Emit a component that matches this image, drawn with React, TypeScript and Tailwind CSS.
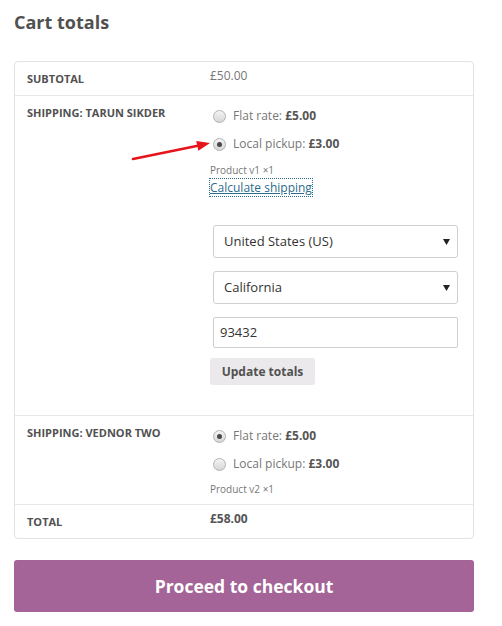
const font = { fontFamily: '"Open Sans", "Liberation Sans", sans-serif' };

const Radio = ({ checked }: { checked?: boolean }) => (
  <span className="relative flex h-[13px] w-[13px] shrink-0 items-center justify-center rounded-full border border-[#b3b3b3] bg-gradient-to-b from-[#f4f4f4] to-[#d6d6d6]">
    {checked && <span className="h-[5px] w-[5px] rounded-full bg-[#4a4a4a]" />}
  </span>
);

const Option = ({ label, price, checked }: { label: string; price: string; checked?: boolean }) => (
  <div className="flex h-[28px] items-center gap-[7px] pl-[3px] text-[12px] leading-[28px] text-[#777]">
    <Radio checked={checked} />
    <span>
      {label} <b className="font-bold text-[#555]">{price}</b>
    </span>
  </div>
);

const Label = ({ children }: { children: string }) => (
  <div className="w-[195px] shrink-0 pl-3 pt-[9px] text-[11px] font-bold leading-[16px] text-[#515151]">
    {children}
  </div>
);

const Caret = () => (
  <svg width="7" height="6" viewBox="0 0 7 6" className="shrink-0">
    <polygon points="0,0 7,0 3.5,6" fill="#222" />
  </svg>
);

export default function App() {
  return (
    <div className="relative min-h-[626px] bg-white px-[14px]" style={font}>
      <h2 className="pt-[8px] text-[18px] font-bold leading-[28px] text-[#515151]">Cart totals</h2>

      <div className="mt-[25px] w-[460px] rounded-[4px] border border-[#e3e3e3]">
        <div className="flex h-[33px]">
          <Label>SUBTOTAL</Label>
          <div className="pt-[4px] text-[12px] leading-[20px] text-[#777]">£50.00</div>
        </div>

        <div className="flex border-t border-[#e8e8e8] pb-[30px]">
          <Label>SHIPPING: TARUN SIKDER</Label>
          <div className="flex-1 pt-[6px]">
            <Option label="Flat rate:" price="£5.00" />
            <Option label="Local pickup:" price="£3.00" checked />
            <div className="mt-[4px] text-[10px] leading-[16px] text-[#777]">Product v1 ×1</div>
            <div className="mt-[1px] text-[12px] leading-[18px]">
              <a href="#" className="text-[#2b6b8a] underline outline-1 outline-dotted outline-[#2b6b8a]">
                Calculate shipping
              </a>
            </div>
            <div className="ml-[3px] mt-[28px] flex w-[245px] flex-col gap-[13px]">
              <div className="flex h-[33px] items-center justify-between rounded-[3px] border border-[#cfcfcf] pl-[10px] pr-[7px] text-[13px] text-[#333]">
                <span>United States (US)</span>
                <Caret />
              </div>
              <div className="flex h-[33px] items-center justify-between rounded-[3px] border border-[#cfcfcf] pl-[10px] pr-[7px] text-[13px] text-[#333]">
                <span>California</span>
                <Caret />
              </div>
              <div className="flex h-[31px] items-center rounded-[2px] border border-[#cfcfcf] pl-[6px] text-[13px] text-[#333]">
                93432
              </div>
            </div>
            <button className="mt-[10px] h-[27px] w-[105px] rounded-[3px] bg-[#ebe9eb] text-[12px] font-bold text-[#515151]">
              Update totals
            </button>
          </div>
        </div>

        <div className="flex border-t border-[#e8e8e8] pb-[7px]">
          <Label>SHIPPING: VEDNOR TWO</Label>
          <div className="flex-1 pt-[6px]">
            <Option label="Flat rate:" price="£5.00" checked />
            <Option label="Local pickup:" price="£3.00" />
            <div className="mt-[3px] text-[10px] leading-[16px] text-[#777]">Product v2 ×1</div>
          </div>
        </div>

        <div className="flex h-[34px] border-t border-[#e8e8e8]">
          <Label>TOTAL</Label>
          <div className="pt-[4px] text-[12px] font-bold leading-[20px] text-[#555]">£58.00</div>
        </div>
      </div>

      <button className="mt-[21px] h-[52px] w-[460px] rounded-[3px] bg-[#a46497] text-[17.5px] font-bold text-white">
        Proceed to checkout
      </button>

      <svg className="pointer-events-none absolute left-0 top-0" width="502" height="626">
        <line x1="133" y1="159" x2="199" y2="145.5" stroke="#e8141c" strokeWidth="2.6" strokeLinecap="round" />
        <polygon points="210,143 198.4,150.7 196.2,140.9" fill="#e8141c" />
      </svg>
    </div>
  );
}
